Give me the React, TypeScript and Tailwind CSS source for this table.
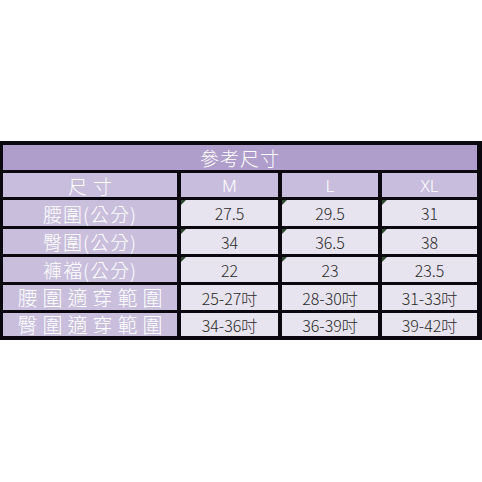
import React from "react";

const rows = [
  { label: "腰圍(公分)", vals: ["27.5", "29.5", "31"], tri: true, wide: false },
  { label: "臀圍(公分)", vals: ["34", "36.5", "38"], tri: true, wide: false },
  { label: "褲襠(公分)", vals: ["22", "23", "23.5"], tri: true, wide: false },
  { label: "腰圍適穿範圍", vals: ["25-27吋", "28-30吋", "31-33吋"], tri: false, wide: true },
  { label: "臀圍適穿範圍", vals: ["34-36吋", "36-39吋", "39-42吋"], tri: false, wide: true },
];

function DataCell({ v, tri }: { v: string; tri: boolean }) {
  return (
    <div className="relative flex items-center justify-center bg-[#e7e3ef] text-[16px] font-light leading-none text-[#2a2a2a]">
      {tri && (
        <svg className="absolute left-0 top-0" width="5" height="5" viewBox="0 0 5 5">
          <polygon points="0,0 5,0 0,5" fill="#2e4a2e" />
        </svg>
      )}
      <span>{v}</span>
    </div>
  );
}

export default function App() {
  return (
    <div className="h-[482px] w-[482px] bg-white pt-[141px] font-['Noto_Sans_CJK_TC','Noto_Sans_CJK_SC',sans-serif]">
      <div className="grid grid-cols-[174px_97px_96px_95px] grid-rows-[25px_24px_26px_25px_25px_25px_23px] gap-x-[4px] gap-y-[3px] bg-[#0b0810] pb-[4px] pl-[3px] pr-[5px] pt-[4px]">
        <div className="col-span-4 flex items-center justify-center bg-[#af9dcb] text-[19px] font-light leading-none tracking-[1px] text-white">
          參考尺寸
        </div>
        <div className="flex items-center justify-center bg-[#c8bddc] text-[19px] font-light leading-none tracking-[6px] text-white">
          <span className="pl-[6px]">尺寸</span>
        </div>
        {["M", "L", "XL"].map((s) => (
          <div key={s} className="flex items-center justify-center bg-[#c8bddc] font-['Noto_Sans',sans-serif] text-[17px] font-light leading-none text-white">
            {s}
          </div>
        ))}
        {rows.map((r) => (
          <React.Fragment key={r.label}>
            <div
              className={
                r.wide
                  ? "flex items-center justify-center whitespace-nowrap bg-[#c9bfdc] text-[20px] font-light leading-none tracking-[5px] text-white"
                  : "flex items-center justify-center whitespace-nowrap bg-[#c9bfdc] text-[19px] font-light leading-none tracking-[1px] text-white"
              }
            >
              <span className={r.wide ? "pl-[5px]" : ""}>{r.label}</span>
            </div>
            {r.vals.map((v, i) => (
              <DataCell key={i} v={v} tri={r.tri} />
            ))}
          </React.Fragment>
        ))}
      </div>
    </div>
  );
}
